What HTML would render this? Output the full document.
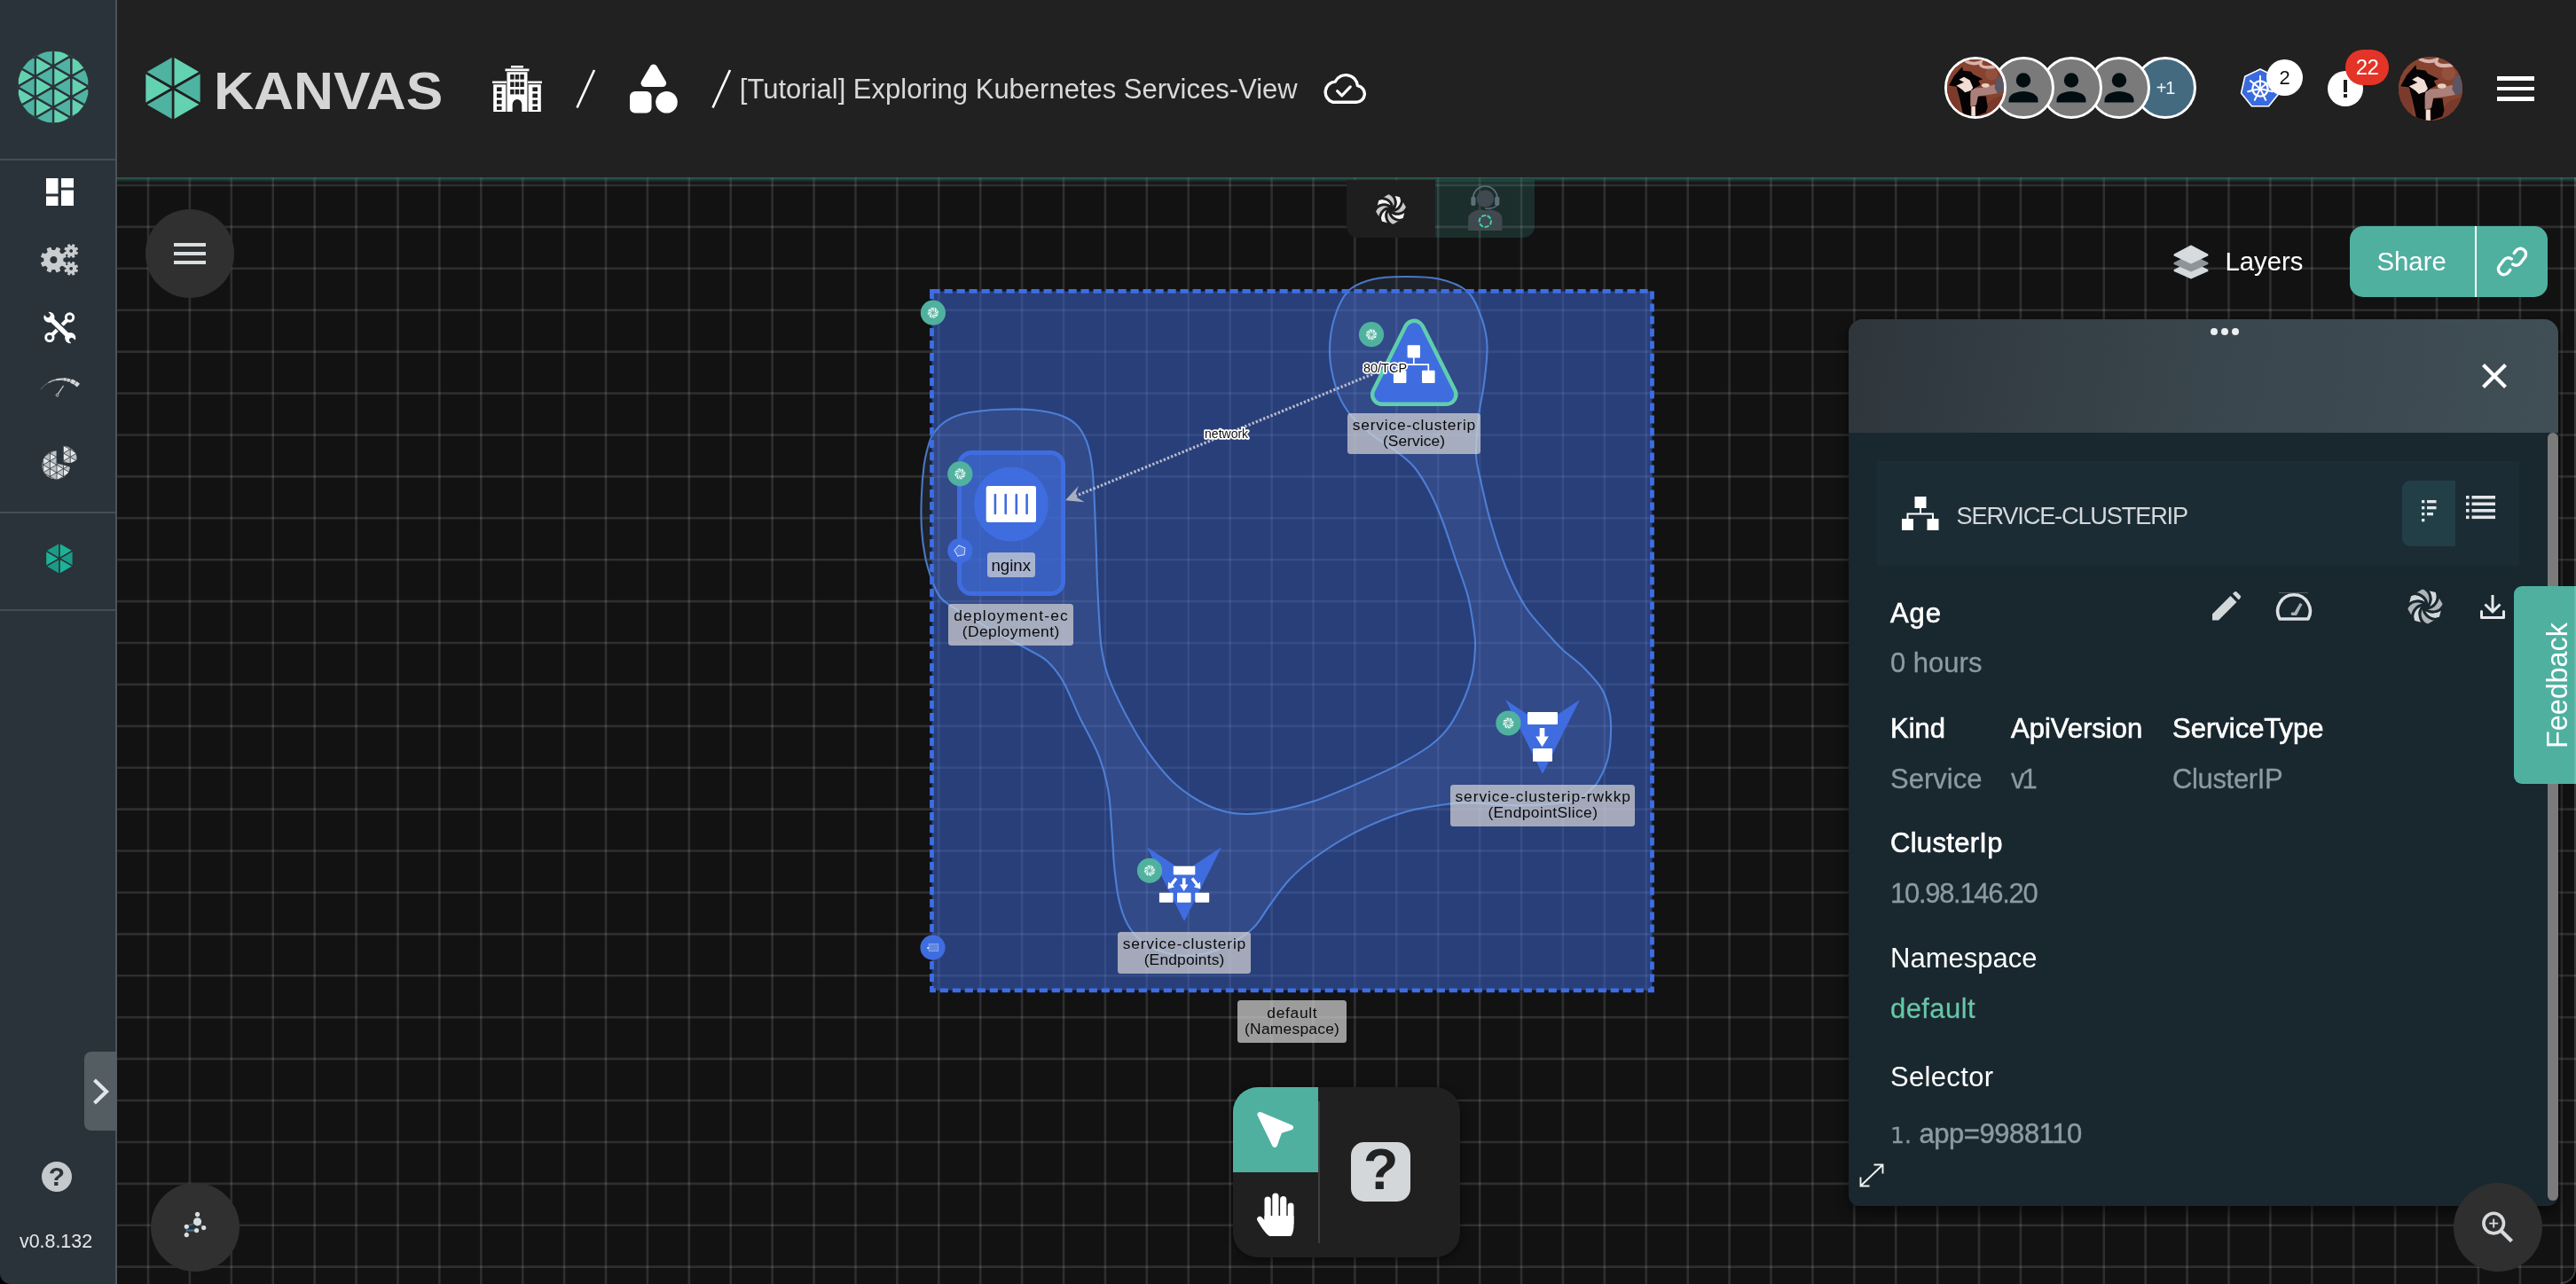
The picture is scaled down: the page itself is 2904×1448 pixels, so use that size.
<!DOCTYPE html>
<html lang="en">
<head>
<meta charset="utf-8">
<title>Kanvas - [Tutorial] Exploring Kubernetes Services-View</title>
<style>
*{box-sizing:border-box;margin:0;padding:0}
html,body{width:2904px;height:1448px;background:#121212}
body{position:relative;font-family:"Liberation Sans",sans-serif;color:#fff}
.abs{position:absolute}
svg{display:block;overflow:visible}
#grid{left:0;top:0;width:2904px;height:1448px}
#sidebar{left:0;top:0;width:132px;height:1448px;background:#2b333a;border-right:2px solid #4a5459}
#sidebar .div{position:absolute;left:0;width:130px;height:2px;background:#474b57;box-shadow:0 -1.5px 0 #29343a,0 1.5px 0 #29343a}
#header{left:132px;top:0;width:2772px;height:200px;background:#212121}
#glow{left:132px;top:200px;width:2772px;height:9px;background:linear-gradient(to bottom,rgba(64,140,124,.66) 0,rgba(56,120,108,.48) 2px,rgba(40,90,80,.18) 5px,rgba(30,70,60,0) 8px)}
.t{position:absolute;white-space:nowrap;line-height:1}
.lbl{position:absolute;background:rgba(215,215,215,.7);border-radius:3.5px;color:#0b0b0b;text-align:center;font-size:17.4px;line-height:18.2px;white-space:nowrap}
.av{width:70px;height:70px;border-radius:50%;border:3px solid #fff;background:#7a7a7a;overflow:hidden}
#panel .h{font-size:31px;color:#fff;-webkit-text-stroke:.65px #fff}
#panel .h2{font-size:31px;color:#fff}
#panel .v{font-size:31px;color:#8d9aa1;-webkit-text-stroke:.3px #8d9aa1}
.rb{position:absolute;border-radius:50%;background:#303030}
</style>
</head>
<body>
<div id="root" style="position:absolute;left:0;top:0;width:2904px;height:1448px;overflow:hidden;will-change:transform">
<svg width="0" height="0" style="position:absolute">
  <defs>
    <g id="avart">
      <rect width="64" height="64" fill="#86432f"/>
      <path d="M30 64L52 44L64 40V64Z" fill="#7a3a2b"/>
      <path d="M0 32C4 30 10 31 12 34C14 42 14 52 15 64H0Z" fill="#7b3a2b"/>
      <circle cx="50" cy="16.500" r="7" fill="#93503c"/>
      <path d="M22 2.500Q30 6.500 38 3Q36 8.500 45 9L53 8.500" fill="none" stroke="#d9b2aa" stroke-width="3.600" stroke-linecap="round"/>
      <path d="M1.900 29.500L8 18.600L17.200 8.300L17.800 12.600L26.900 13.800L29.300 16.800L40.300 22.200L35.400 24L37.800 28.900L31.800 31.900L26.900 35.500V64H18.400L13.500 41.500L10.500 30.700Z" fill="#050304"/>
      <path d="M13.500 22.800L19 19.800L25.700 23.400L29.300 31.900L26.900 34.900L20.200 37.300L17.200 34.300L10.500 29.500L19 25.800Z" fill="#f1ddd4"/>
      <path d="M34.800 41.500H43.900L45.700 53.600L43.900 59.700L32.400 64L31.800 52.700Z" fill="#050304"/>
      <path d="M26.900 35.500L31.800 32.500L39 31.900L53.600 28.300L57.300 37.900L47.600 39.700L34.800 41.500L33 51.200L26.300 52.700L26.300 39.100Z" fill="#ab807a"/>
      <path d="M56.100 19.800L62.800 19.200L64 35.500L57.300 39.100L53.600 32.500Z" fill="#5b5663"/>
      <ellipse cx="43.300" cy="29.300" rx="4.400" ry="2.400" fill="#ead0bf"/>
      <rect x="27.500" y="53" width="4.300" height="11" fill="#f1ddd4"/>
    </g>
    <g id="swirl" stroke-linejoin="round"><path d="M-0.139 -0.990L0.602 -0.799A0.62 0.62 0 0 1 0.039 0.092L0.093 0.037A0.62 0.62 0 0 0 -0.139 -0.990ZM0.990 -0.139L0.799 0.602A0.62 0.62 0 0 1 -0.092 0.039L-0.037 0.093A0.62 0.62 0 0 0 0.990 -0.139ZM0.139 0.990L-0.602 0.799A0.62 0.62 0 0 1 -0.039 -0.092L-0.093 -0.037A0.62 0.62 0 0 0 0.139 0.990ZM-0.990 0.139L-0.799 -0.602A0.62 0.62 0 0 1 0.092 -0.039L0.037 -0.093A0.62 0.62 0 0 0 -0.990 0.139Z"/><path d="M0.602 -0.799L0.990 -0.139A0.62 0.62 0 0 1 -0.037 0.093L0.039 0.092A0.62 0.62 0 0 0 0.602 -0.799ZM0.799 0.602L0.139 0.990A0.62 0.62 0 0 1 -0.093 -0.037L-0.092 0.039A0.62 0.62 0 0 0 0.799 0.602ZM-0.602 0.799L-0.990 0.139A0.62 0.62 0 0 1 0.037 -0.093L-0.039 -0.092A0.62 0.62 0 0 0 -0.602 0.799ZM-0.799 -0.602L-0.139 -0.990A0.62 0.62 0 0 1 0.093 0.037L0.092 -0.039A0.62 0.62 0 0 0 -0.799 -0.602Z" fill-opacity=".8"/></g>
  </defs>
</svg>
<svg id="grid" class="abs" width="2904" height="1448" viewBox="0 0 2904 1448"><path d="M167.00 200V1448M213.91 200V1448M260.82 200V1448M307.73 200V1448M354.64 200V1448M401.55 200V1448M448.46 200V1448M495.37 200V1448M542.28 200V1448M589.19 200V1448M636.10 200V1448M683.01 200V1448M729.92 200V1448M776.83 200V1448M823.74 200V1448M870.65 200V1448M917.56 200V1448M964.47 200V1448M1011.38 200V1448M1058.29 200V1448M1105.20 200V1448M1152.11 200V1448M1199.02 200V1448M1245.93 200V1448M1292.84 200V1448M1339.75 200V1448M1386.66 200V1448M1433.57 200V1448M1480.48 200V1448M1527.39 200V1448M1574.30 200V1448M1621.21 200V1448M1668.12 200V1448M1715.03 200V1448M1761.94 200V1448M1808.85 200V1448M1855.76 200V1448M1902.67 200V1448M1949.58 200V1448M1996.49 200V1448M2043.40 200V1448M2090.31 200V1448M2137.22 200V1448M2184.13 200V1448M2231.04 200V1448M2277.95 200V1448M2324.86 200V1448M2371.77 200V1448M2418.68 200V1448M2465.59 200V1448M2512.50 200V1448M2559.41 200V1448M2606.32 200V1448M2653.23 200V1448M2700.14 200V1448M2747.05 200V1448M2793.96 200V1448M2840.87 200V1448M2887.78 200V1448" stroke="rgba(255,255,255,.122)" stroke-width="2.6" fill="none"/><path d="M132 209.00H2904M132 255.91H2904M132 302.82H2904M132 349.73H2904M132 396.64H2904M132 443.55H2904M132 490.46H2904M132 537.37H2904M132 584.28H2904M132 631.19H2904M132 678.10H2904M132 725.01H2904M132 771.92H2904M132 818.83H2904M132 865.74H2904M132 912.65H2904M132 959.56H2904M132 1006.47H2904M132 1053.38H2904M132 1100.29H2904M132 1147.20H2904M132 1194.11H2904M132 1241.02H2904M132 1287.93H2904M132 1334.84H2904M132 1381.75H2904M132 1428.66H2904" stroke="rgba(255,255,255,.122)" stroke-width="2.6" fill="none"/></svg>
<div id="sidebar" class="abs">
<div class="div" style="top:179px"></div>
<div class="div" style="top:577px"></div>
<div class="div" style="top:687px"></div>
<svg class="abs" style="left:0;top:0" width="132" height="180" viewBox="0 0 132 180"><defs><clipPath id="mc"><circle cx="60" cy="98" r="40.2"/></clipPath></defs><g clip-path="url(#mc)" stroke="#2b333a" stroke-width="2.3" stroke-linejoin="miter"><path d="M-0.6 -53.5L-0.6 -30.2L19.6 -41.8ZM-0.6 -30.2L-0.6 -6.9L19.6 -18.5ZM-0.6 -6.9L-0.6 16.5L19.6 4.8ZM-0.6 16.5L-0.6 39.8L19.6 28.1ZM-0.6 39.8L-0.6 63.0L19.6 51.4ZM-0.6 63.0L-0.6 86.3L19.6 74.7ZM-0.6 86.3L-0.6 109.7L19.6 98.0ZM-0.6 109.7L-0.6 132.9L19.6 121.3ZM-0.6 132.9L-0.6 156.2L19.6 144.6ZM-0.6 156.2L-0.6 179.6L19.6 167.9ZM19.6 -41.8L19.6 -18.5L39.8 -30.2ZM19.6 -18.5L19.6 4.8L39.8 -6.9ZM19.6 4.8L19.6 28.1L39.8 16.5ZM19.6 28.1L19.6 51.4L39.8 39.8ZM19.6 51.4L19.6 74.7L39.8 63.0ZM19.6 74.7L19.6 98.0L39.8 86.3ZM19.6 98.0L19.6 121.3L39.8 109.7ZM19.6 121.3L19.6 144.6L39.8 132.9ZM19.6 144.6L19.6 167.9L39.8 156.2ZM19.6 167.9L19.6 191.2L39.8 179.6ZM39.8 -30.2L39.8 -6.9L60.0 -18.5ZM39.8 -6.9L39.8 16.5L60.0 4.8ZM39.8 16.5L39.8 39.8L60.0 28.1ZM39.8 39.8L39.8 63.0L60.0 51.4ZM39.8 63.0L39.8 86.3L60.0 74.7ZM39.8 86.3L39.8 109.7L60.0 98.0ZM39.8 109.7L39.8 132.9L60.0 121.3ZM39.8 132.9L39.8 156.2L60.0 144.6ZM39.8 156.2L39.8 179.6L60.0 167.9ZM39.8 179.6L39.8 202.9L60.0 191.2ZM60.0 -18.5L60.0 4.8L80.2 -6.9ZM60.0 4.8L60.0 28.1L80.2 16.5ZM60.0 28.1L60.0 51.4L80.2 39.8ZM60.0 51.4L60.0 74.7L80.2 63.0ZM60.0 74.7L60.0 98.0L80.2 86.3ZM60.0 98.0L60.0 121.3L80.2 109.7ZM60.0 121.3L60.0 144.6L80.2 132.9ZM60.0 144.6L60.0 167.9L80.2 156.2ZM60.0 167.9L60.0 191.2L80.2 179.6ZM60.0 191.2L60.0 214.5L80.2 202.9ZM80.2 -6.9L80.2 16.5L100.4 4.8ZM80.2 16.5L80.2 39.8L100.4 28.1ZM80.2 39.8L80.2 63.0L100.4 51.4ZM80.2 63.0L80.2 86.3L100.4 74.7ZM80.2 86.3L80.2 109.7L100.4 98.0ZM80.2 109.7L80.2 132.9L100.4 121.3ZM80.2 132.9L80.2 156.2L100.4 144.6ZM80.2 156.2L80.2 179.6L100.4 167.9ZM80.2 179.6L80.2 202.9L100.4 191.2ZM80.2 202.9L80.2 226.2L100.4 214.5ZM100.4 4.8L100.4 28.1L120.6 16.5ZM100.4 28.1L100.4 51.4L120.6 39.8ZM100.4 51.4L100.4 74.7L120.6 63.0ZM100.4 74.7L100.4 98.0L120.6 86.3ZM100.4 98.0L100.4 121.3L120.6 109.7ZM100.4 121.3L100.4 144.6L120.6 132.9ZM100.4 144.6L100.4 167.9L120.6 156.2ZM100.4 167.9L100.4 191.2L120.6 179.6ZM100.4 191.2L100.4 214.5L120.6 202.9ZM100.4 214.5L100.4 237.8L120.6 226.2Z" fill="#63d2b0"/><path d="M19.6 -41.8L19.6 -18.5L-0.6 -30.2ZM19.6 -18.5L19.6 4.8L-0.6 -6.9ZM19.6 4.8L19.6 28.1L-0.6 16.5ZM19.6 28.1L19.6 51.4L-0.6 39.8ZM19.6 51.4L19.6 74.7L-0.6 63.0ZM19.6 74.7L19.6 98.0L-0.6 86.3ZM19.6 98.0L19.6 121.3L-0.6 109.7ZM19.6 121.3L19.6 144.6L-0.6 132.9ZM19.6 144.6L19.6 167.9L-0.6 156.2ZM19.6 167.9L19.6 191.2L-0.6 179.6ZM39.8 -30.2L39.8 -6.9L19.6 -18.5ZM39.8 -6.9L39.8 16.5L19.6 4.8ZM39.8 16.5L39.8 39.8L19.6 28.1ZM39.8 39.8L39.8 63.0L19.6 51.4ZM39.8 63.0L39.8 86.3L19.6 74.7ZM39.8 86.3L39.8 109.7L19.6 98.0ZM39.8 109.7L39.8 132.9L19.6 121.3ZM39.8 132.9L39.8 156.2L19.6 144.6ZM39.8 156.2L39.8 179.6L19.6 167.9ZM39.8 179.6L39.8 202.9L19.6 191.2ZM60.0 -18.5L60.0 4.8L39.8 -6.9ZM60.0 4.8L60.0 28.1L39.8 16.5ZM60.0 28.1L60.0 51.4L39.8 39.8ZM60.0 51.4L60.0 74.7L39.8 63.0ZM60.0 74.7L60.0 98.0L39.8 86.3ZM60.0 98.0L60.0 121.3L39.8 109.7ZM60.0 121.3L60.0 144.6L39.8 132.9ZM60.0 144.6L60.0 167.9L39.8 156.2ZM60.0 167.9L60.0 191.2L39.8 179.6ZM60.0 191.2L60.0 214.5L39.8 202.9ZM80.2 -6.9L80.2 16.5L60.0 4.8ZM80.2 16.5L80.2 39.8L60.0 28.1ZM80.2 39.8L80.2 63.0L60.0 51.4ZM80.2 63.0L80.2 86.3L60.0 74.7ZM80.2 86.3L80.2 109.7L60.0 98.0ZM80.2 109.7L80.2 132.9L60.0 121.3ZM80.2 132.9L80.2 156.2L60.0 144.6ZM80.2 156.2L80.2 179.6L60.0 167.9ZM80.2 179.6L80.2 202.9L60.0 191.2ZM80.2 202.9L80.2 226.2L60.0 214.5ZM100.4 4.8L100.4 28.1L80.2 16.5ZM100.4 28.1L100.4 51.4L80.2 39.8ZM100.4 51.4L100.4 74.7L80.2 63.0ZM100.4 74.7L100.4 98.0L80.2 86.3ZM100.4 98.0L100.4 121.3L80.2 109.7ZM100.4 121.3L100.4 144.6L80.2 132.9ZM100.4 144.6L100.4 167.9L80.2 156.2ZM100.4 167.9L100.4 191.2L80.2 179.6ZM100.4 191.2L100.4 214.5L80.2 202.9ZM100.4 214.5L100.4 237.8L80.2 226.2ZM120.6 16.5L120.6 39.8L100.4 28.1ZM120.6 39.8L120.6 63.0L100.4 51.4ZM120.6 63.0L120.6 86.3L100.4 74.7ZM120.6 86.3L120.6 109.7L100.4 98.0ZM120.6 109.7L120.6 132.9L100.4 121.3ZM120.6 132.9L120.6 156.2L100.4 144.6ZM120.6 156.2L120.6 179.6L100.4 167.9ZM120.6 179.6L120.6 202.9L100.4 191.2ZM120.6 202.9L120.6 226.2L100.4 214.5ZM120.6 226.2L120.6 249.5L100.4 237.8Z" fill="#4fb3a2"/></g></svg>
<svg class="abs" style="left:52px;top:201px" width="31" height="31" viewBox="0 0 31 31" fill="#fff"><rect x="0" y="0" width="13.500" height="17.500"/><rect x="17" y="0" width="14" height="10.500"/><rect x="0" y="20.500" width="13.500" height="10.500"/><rect x="17" y="13.500" width="14" height="17.500"/></svg>
<svg class="abs" style="left:0;top:0" width="132" height="330" viewBox="0 0 132 330"><path d="M70.81 294.99L74.13 296.64L72.68 300.13L69.17 298.96L66.36 301.77L67.53 305.28L64.04 306.73L62.39 303.41L58.41 303.41L56.76 306.73L53.27 305.28L54.44 301.77L51.63 298.96L48.12 300.13L46.67 296.64L49.99 294.99L49.99 291.01L46.67 289.36L48.12 285.87L51.63 287.04L54.44 284.23L53.27 280.72L56.76 279.27L58.41 282.59L62.39 282.59L64.04 279.27L67.53 280.72L66.36 284.23L69.17 287.04L72.68 285.87L74.13 289.36L70.81 291.01ZM65.00 293.00A4.6 4.6 0 1 0 55.80 293.00A4.6 4.6 0 1 0 65.00 293.00ZM85.41 283.99L87.35 284.90L86.60 286.72L84.58 285.98L83.18 287.38L83.92 289.40L82.10 290.15L81.19 288.21L79.21 288.21L78.30 290.15L76.48 289.40L77.22 287.38L75.82 285.98L73.80 286.72L73.05 284.90L74.99 283.99L74.99 282.01L73.05 281.10L73.80 279.28L75.82 280.02L77.22 278.62L76.48 276.60L78.30 275.85L79.21 277.79L81.19 277.79L82.10 275.85L83.92 276.60L83.18 278.62L84.58 280.02L86.60 279.28L87.35 281.10L85.41 282.01ZM82.70 283.00A2.5 2.5 0 1 0 77.70 283.00A2.5 2.5 0 1 0 82.70 283.00ZM85.41 303.79L87.35 304.70L86.60 306.52L84.58 305.78L83.18 307.18L83.92 309.20L82.10 309.95L81.19 308.01L79.21 308.01L78.30 309.95L76.48 309.20L77.22 307.18L75.82 305.78L73.80 306.52L73.05 304.70L74.99 303.79L74.99 301.81L73.05 300.90L73.80 299.08L75.82 299.82L77.22 298.42L76.48 296.40L78.30 295.65L79.21 297.59L81.19 297.59L82.10 295.65L83.92 296.40L83.18 298.42L84.58 299.82L86.60 299.08L87.35 300.90L85.41 301.81ZM82.70 302.80A2.5 2.5 0 1 0 77.70 302.80A2.5 2.5 0 1 0 82.70 302.80Z" fill="#c9cdd0" fill-rule="evenodd" stroke="#c9cdd0" stroke-width="1.2" stroke-linejoin="round"/></svg>
<svg class="abs" style="left:49px;top:351px" width="37" height="37" viewBox="0 0 37 37">
 <path d="M26.300 10.200L10.100 26.200" stroke="#fff" stroke-width="4.300"/>
 <circle cx="29.550" cy="7" r="4.200" fill="none" stroke="#fff" stroke-width="2.900"/>
 <circle cx="6.900" cy="29.400" r="4.200" fill="none" stroke="#fff" stroke-width="2.900"/>
 <path d="M9 9.300L28 27.800" stroke="#2b333a" stroke-width="8.400"/>
 <path d="M6.400 6.800L30.250 30.100" stroke="#fff" stroke-width="5.500"/>
 <circle cx="6.420" cy="6.760" r="6.100" fill="#fff"/><circle cx="30.250" cy="30.100" r="6.100" fill="#fff"/>
 <path d="M5 4.400L-1 -1.600" stroke="#2b333a" stroke-width="5.400" stroke-linecap="round"/>
 <path d="M31.700 32.500L37.700 38.500" stroke="#2b333a" stroke-width="5.400" stroke-linecap="round"/>
</svg>
<svg class="abs" style="left:0;top:400px" width="132" height="80" viewBox="0 400 132 80" fill="none">
 <path d="M45.74 439.22A29.7 29.7 0 0 1 54.45 431.58" stroke="#7f888e" stroke-width=".7"/>
 <path d="M54.45 431.58A29.7 29.7 0 0 1 63.13 428.25" stroke="#aab0b4" stroke-width="1.300"/>
 <path d="M63.13 428.25A29.7 29.7 0 0 1 71.37 427.67" stroke="#c9cdd0" stroke-width="2.300"/>
 <path d="M71.37 427.67A29.7 29.7 0 0 1 80.43 429.76" stroke="#cfd3d5" stroke-width="3.400" stroke-dasharray="3.600 .5"/>
 <path d="M80.43 429.76A29.7 29.7 0 0 1 88.78 434.89" stroke="#d5d8da" stroke-width="4.700" stroke-dasharray="4.400 .6"/>
 <path d="M65.200 444.400L71.600 435" stroke="#d5d8da" stroke-width="1.100"/>
 <circle cx="64.500" cy="445.600" r="1.400" stroke="#d5d8da" stroke-width=".9"/>
</svg>
<svg class="abs" style="left:0;top:490px" width="132" height="70" viewBox="0 490 132 70">
 <defs><clipPath id="pc"><path d="M63.900 524.200L63.85 508.61A15.900 15.900 0 1 0 79.05 526.71Q70 524 63.900 522.500Z"/><path d="M71.100 518.800L71.10 502.90A15.900 15.900 0 0 1 86.96 517.69Q80 524.500 71.100 520.800Z"/></clipPath></defs>
 <g clip-path="url(#pc)" stroke="#2b333a" stroke-width=".55"><path d="M33.50 445.27L33.50 454.04L41.10 449.66ZM33.50 454.04L33.50 462.81L41.10 458.43ZM33.50 462.81L33.50 471.58L41.10 467.20ZM33.50 471.58L33.50 480.35L41.10 475.97ZM33.50 480.35L33.50 489.12L41.10 484.74ZM33.50 489.12L33.50 497.89L41.10 493.51ZM33.50 497.89L33.50 506.66L41.10 502.28ZM33.50 506.66L33.50 515.43L41.10 511.05ZM33.50 515.43L33.50 524.20L41.10 519.82ZM33.50 524.20L33.50 532.97L41.10 528.59ZM33.50 532.97L33.50 541.74L41.10 537.36ZM33.50 541.74L33.50 550.51L41.10 546.12ZM33.50 550.51L33.50 559.28L41.10 554.90ZM33.50 559.28L33.50 568.05L41.10 563.67ZM41.10 449.66L41.10 458.43L48.70 454.04ZM41.10 458.43L41.10 467.20L48.70 462.81ZM41.10 467.20L41.10 475.97L48.70 471.58ZM41.10 475.97L41.10 484.74L48.70 480.35ZM41.10 484.74L41.10 493.51L48.70 489.12ZM41.10 493.51L41.10 502.28L48.70 497.89ZM41.10 502.28L41.10 511.05L48.70 506.66ZM41.10 511.05L41.10 519.82L48.70 515.43ZM41.10 519.82L41.10 528.59L48.70 524.20ZM41.10 528.59L41.10 537.36L48.70 532.97ZM41.10 537.36L41.10 546.12L48.70 541.74ZM41.10 546.12L41.10 554.90L48.70 550.51ZM41.10 554.90L41.10 563.67L48.70 559.28ZM41.10 563.67L41.10 572.44L48.70 568.05ZM48.70 454.04L48.70 462.81L56.30 458.43ZM48.70 462.81L48.70 471.58L56.30 467.20ZM48.70 471.58L48.70 480.35L56.30 475.97ZM48.70 480.35L48.70 489.12L56.30 484.74ZM48.70 489.12L48.70 497.89L56.30 493.51ZM48.70 497.89L48.70 506.66L56.30 502.28ZM48.70 506.66L48.70 515.43L56.30 511.05ZM48.70 515.43L48.70 524.20L56.30 519.82ZM48.70 524.20L48.70 532.97L56.30 528.59ZM48.70 532.97L48.70 541.74L56.30 537.36ZM48.70 541.74L48.70 550.51L56.30 546.12ZM48.70 550.51L48.70 559.28L56.30 554.90ZM48.70 559.28L48.70 568.05L56.30 563.67ZM48.70 568.05L48.70 576.82L56.30 572.44ZM56.30 458.43L56.30 467.20L63.90 462.81ZM56.30 467.20L56.30 475.97L63.90 471.58ZM56.30 475.97L56.30 484.74L63.90 480.35ZM56.30 484.74L56.30 493.51L63.90 489.12ZM56.30 493.51L56.30 502.28L63.90 497.89ZM56.30 502.28L56.30 511.05L63.90 506.66ZM56.30 511.05L56.30 519.82L63.90 515.43ZM56.30 519.82L56.30 528.59L63.90 524.20ZM56.30 528.59L56.30 537.36L63.90 532.97ZM56.30 537.36L56.30 546.12L63.90 541.74ZM56.30 546.12L56.30 554.90L63.90 550.51ZM56.30 554.90L56.30 563.67L63.90 559.28ZM56.30 563.67L56.30 572.44L63.90 568.05ZM56.30 572.44L56.30 581.21L63.90 576.82ZM63.90 462.81L63.90 471.58L71.50 467.20ZM63.90 471.58L63.90 480.35L71.50 475.97ZM63.90 480.35L63.90 489.12L71.50 484.74ZM63.90 489.12L63.90 497.89L71.50 493.51ZM63.90 497.89L63.90 506.66L71.50 502.28ZM63.90 506.66L63.90 515.43L71.50 511.05ZM63.90 515.43L63.90 524.20L71.50 519.82ZM63.90 524.20L63.90 532.97L71.50 528.59ZM63.90 532.97L63.90 541.74L71.50 537.36ZM63.90 541.74L63.90 550.51L71.50 546.12ZM63.90 550.51L63.90 559.28L71.50 554.90ZM63.90 559.28L63.90 568.05L71.50 563.67ZM63.90 568.05L63.90 576.82L71.50 572.44ZM63.90 576.82L63.90 585.59L71.50 581.21ZM71.50 467.20L71.50 475.97L79.10 471.58ZM71.50 475.97L71.50 484.74L79.10 480.35ZM71.50 484.74L71.50 493.51L79.10 489.12ZM71.50 493.51L71.50 502.28L79.10 497.89ZM71.50 502.28L71.50 511.05L79.10 506.66ZM71.50 511.05L71.50 519.82L79.10 515.43ZM71.50 519.82L71.50 528.59L79.10 524.20ZM71.50 528.59L71.50 537.36L79.10 532.97ZM71.50 537.36L71.50 546.12L79.10 541.74ZM71.50 546.12L71.50 554.90L79.10 550.51ZM71.50 554.90L71.50 563.67L79.10 559.28ZM71.50 563.67L71.50 572.44L79.10 568.05ZM71.50 572.44L71.50 581.21L79.10 576.82ZM71.50 581.21L71.50 589.98L79.10 585.59ZM79.10 471.58L79.10 480.35L86.70 475.97ZM79.10 480.35L79.10 489.12L86.70 484.74ZM79.10 489.12L79.10 497.89L86.70 493.51ZM79.10 497.89L79.10 506.66L86.70 502.28ZM79.10 506.66L79.10 515.43L86.70 511.05ZM79.10 515.43L79.10 524.20L86.70 519.82ZM79.10 524.20L79.10 532.97L86.70 528.59ZM79.10 532.97L79.10 541.74L86.70 537.36ZM79.10 541.74L79.10 550.51L86.70 546.12ZM79.10 550.51L79.10 559.28L86.70 554.90ZM79.10 559.28L79.10 568.05L86.70 563.67ZM79.10 568.05L79.10 576.82L86.70 572.44ZM79.10 576.82L79.10 585.59L86.70 581.21ZM79.10 585.59L79.10 594.36L86.70 589.98ZM86.70 475.97L86.70 484.74L94.30 480.35ZM86.70 484.74L86.70 493.51L94.30 489.12ZM86.70 493.51L86.70 502.28L94.30 497.89ZM86.70 502.28L86.70 511.05L94.30 506.66ZM86.70 511.05L86.70 519.82L94.30 515.43ZM86.70 519.82L86.70 528.59L94.30 524.20ZM86.70 528.59L86.70 537.36L94.30 532.97ZM86.70 537.36L86.70 546.12L94.30 541.74ZM86.70 546.12L86.70 554.90L94.30 550.51ZM86.70 554.90L86.70 563.67L94.30 559.28ZM86.70 563.67L86.70 572.44L94.30 568.05ZM86.70 572.44L86.70 581.21L94.30 576.82ZM86.70 581.21L86.70 589.98L94.30 585.59ZM86.70 589.98L86.70 598.75L94.30 594.36ZM94.30 480.35L94.30 489.12L101.90 484.74ZM94.30 489.12L94.30 497.89L101.90 493.51ZM94.30 497.89L94.30 506.66L101.90 502.28ZM94.30 506.66L94.30 515.43L101.90 511.05ZM94.30 515.43L94.30 524.20L101.90 519.82ZM94.30 524.20L94.30 532.97L101.90 528.59ZM94.30 532.97L94.30 541.74L101.90 537.36ZM94.30 541.74L94.30 550.51L101.90 546.12ZM94.30 550.51L94.30 559.28L101.90 554.90ZM94.30 559.28L94.30 568.05L101.90 563.67ZM94.30 568.05L94.30 576.82L101.90 572.44ZM94.30 576.82L94.30 585.59L101.90 581.21ZM94.30 585.59L94.30 594.36L101.90 589.98ZM94.30 594.36L94.30 603.13L101.90 598.75Z" fill="#e6e8e9"/><path d="M41.10 449.66L41.10 458.43L33.50 454.04ZM41.10 458.43L41.10 467.20L33.50 462.81ZM41.10 467.20L41.10 475.97L33.50 471.58ZM41.10 475.97L41.10 484.74L33.50 480.35ZM41.10 484.74L41.10 493.51L33.50 489.12ZM41.10 493.51L41.10 502.28L33.50 497.89ZM41.10 502.28L41.10 511.05L33.50 506.66ZM41.10 511.05L41.10 519.82L33.50 515.43ZM41.10 519.82L41.10 528.59L33.50 524.20ZM41.10 528.59L41.10 537.36L33.50 532.97ZM41.10 537.36L41.10 546.12L33.50 541.74ZM41.10 546.12L41.10 554.90L33.50 550.51ZM41.10 554.90L41.10 563.67L33.50 559.28ZM41.10 563.67L41.10 572.44L33.50 568.05ZM48.70 454.04L48.70 462.81L41.10 458.43ZM48.70 462.81L48.70 471.58L41.10 467.20ZM48.70 471.58L48.70 480.35L41.10 475.97ZM48.70 480.35L48.70 489.12L41.10 484.74ZM48.70 489.12L48.70 497.89L41.10 493.51ZM48.70 497.89L48.70 506.66L41.10 502.28ZM48.70 506.66L48.70 515.43L41.10 511.05ZM48.70 515.43L48.70 524.20L41.10 519.82ZM48.70 524.20L48.70 532.97L41.10 528.59ZM48.70 532.97L48.70 541.74L41.10 537.36ZM48.70 541.74L48.70 550.51L41.10 546.12ZM48.70 550.51L48.70 559.28L41.10 554.90ZM48.70 559.28L48.70 568.05L41.10 563.67ZM48.70 568.05L48.70 576.82L41.10 572.44ZM56.30 458.43L56.30 467.20L48.70 462.81ZM56.30 467.20L56.30 475.97L48.70 471.58ZM56.30 475.97L56.30 484.74L48.70 480.35ZM56.30 484.74L56.30 493.51L48.70 489.12ZM56.30 493.51L56.30 502.28L48.70 497.89ZM56.30 502.28L56.30 511.05L48.70 506.66ZM56.30 511.05L56.30 519.82L48.70 515.43ZM56.30 519.82L56.30 528.59L48.70 524.20ZM56.30 528.59L56.30 537.36L48.70 532.97ZM56.30 537.36L56.30 546.12L48.70 541.74ZM56.30 546.12L56.30 554.90L48.70 550.51ZM56.30 554.90L56.30 563.67L48.70 559.28ZM56.30 563.67L56.30 572.44L48.70 568.05ZM56.30 572.44L56.30 581.21L48.70 576.82ZM63.90 462.81L63.90 471.58L56.30 467.20ZM63.90 471.58L63.90 480.35L56.30 475.97ZM63.90 480.35L63.90 489.12L56.30 484.74ZM63.90 489.12L63.90 497.89L56.30 493.51ZM63.90 497.89L63.90 506.66L56.30 502.28ZM63.90 506.66L63.90 515.43L56.30 511.05ZM63.90 515.43L63.90 524.20L56.30 519.82ZM63.90 524.20L63.90 532.97L56.30 528.59ZM63.90 532.97L63.90 541.74L56.30 537.36ZM63.90 541.74L63.90 550.51L56.30 546.12ZM63.90 550.51L63.90 559.28L56.30 554.90ZM63.90 559.28L63.90 568.05L56.30 563.67ZM63.90 568.05L63.90 576.82L56.30 572.44ZM63.90 576.82L63.90 585.59L56.30 581.21ZM71.50 467.20L71.50 475.97L63.90 471.58ZM71.50 475.97L71.50 484.74L63.90 480.35ZM71.50 484.74L71.50 493.51L63.90 489.12ZM71.50 493.51L71.50 502.28L63.90 497.89ZM71.50 502.28L71.50 511.05L63.90 506.66ZM71.50 511.05L71.50 519.82L63.90 515.43ZM71.50 519.82L71.50 528.59L63.90 524.20ZM71.50 528.59L71.50 537.36L63.90 532.97ZM71.50 537.36L71.50 546.12L63.90 541.74ZM71.50 546.12L71.50 554.90L63.90 550.51ZM71.50 554.90L71.50 563.67L63.90 559.28ZM71.50 563.67L71.50 572.44L63.90 568.05ZM71.50 572.44L71.50 581.21L63.90 576.82ZM71.50 581.21L71.50 589.98L63.90 585.59ZM79.10 471.58L79.10 480.35L71.50 475.97ZM79.10 480.35L79.10 489.12L71.50 484.74ZM79.10 489.12L79.10 497.89L71.50 493.51ZM79.10 497.89L79.10 506.66L71.50 502.28ZM79.10 506.66L79.10 515.43L71.50 511.05ZM79.10 515.43L79.10 524.20L71.50 519.82ZM79.10 524.20L79.10 532.97L71.50 528.59ZM79.10 532.97L79.10 541.74L71.50 537.36ZM79.10 541.74L79.10 550.51L71.50 546.12ZM79.10 550.51L79.10 559.28L71.50 554.90ZM79.10 559.28L79.10 568.05L71.50 563.67ZM79.10 568.05L79.10 576.82L71.50 572.44ZM79.10 576.82L79.10 585.59L71.50 581.21ZM79.10 585.59L79.10 594.36L71.50 589.98ZM86.70 475.97L86.70 484.74L79.10 480.35ZM86.70 484.74L86.70 493.51L79.10 489.12ZM86.70 493.51L86.70 502.28L79.10 497.89ZM86.70 502.28L86.70 511.05L79.10 506.66ZM86.70 511.05L86.70 519.82L79.10 515.43ZM86.70 519.82L86.70 528.59L79.10 524.20ZM86.70 528.59L86.70 537.36L79.10 532.97ZM86.70 537.36L86.70 546.12L79.10 541.74ZM86.70 546.12L86.70 554.90L79.10 550.51ZM86.70 554.90L86.70 563.67L79.10 559.28ZM86.70 563.67L86.70 572.44L79.10 568.05ZM86.70 572.44L86.70 581.21L79.10 576.82ZM86.70 581.21L86.70 589.98L79.10 585.59ZM86.70 589.98L86.70 598.75L79.10 594.36ZM94.30 480.35L94.30 489.12L86.70 484.74ZM94.30 489.12L94.30 497.89L86.70 493.51ZM94.30 497.89L94.30 506.66L86.70 502.28ZM94.30 506.66L94.30 515.43L86.70 511.05ZM94.30 515.43L94.30 524.20L86.70 519.82ZM94.30 524.20L94.30 532.97L86.70 528.59ZM94.30 532.97L94.30 541.74L86.70 537.36ZM94.30 541.74L94.30 550.51L86.70 546.12ZM94.30 550.51L94.30 559.28L86.70 554.90ZM94.30 559.28L94.30 568.05L86.70 563.67ZM94.30 568.05L94.30 576.82L86.70 572.44ZM94.30 576.82L94.30 585.59L86.70 581.21ZM94.30 585.59L94.30 594.36L86.70 589.98ZM94.30 594.36L94.30 603.13L86.70 598.75ZM101.90 484.74L101.90 493.51L94.30 489.12ZM101.90 493.51L101.90 502.28L94.30 497.89ZM101.90 502.28L101.90 511.05L94.30 506.66ZM101.90 511.05L101.90 519.82L94.30 515.43ZM101.90 519.82L101.90 528.59L94.30 524.20ZM101.90 528.59L101.90 537.36L94.30 532.97ZM101.90 537.36L101.90 546.12L94.30 541.74ZM101.90 546.12L101.90 554.90L94.30 550.51ZM101.90 554.90L101.90 563.67L94.30 559.28ZM101.90 563.67L101.90 572.44L94.30 568.05ZM101.90 572.44L101.90 581.21L94.30 576.82ZM101.90 581.21L101.90 589.98L94.30 585.59ZM101.90 589.98L101.90 598.75L94.30 594.36ZM101.90 598.75L101.90 607.52L94.30 603.13Z" fill="#bec2c5"/></g>
</svg>
<svg class="abs" style="left:0;top:600px" width="132" height="60" viewBox="0 600 132 60"><g stroke="#2b333a" stroke-width="1.500"><path d="M66.9 629.8L66.90 612.00L82.32 620.90Z" fill="#1bb398"/><path d="M66.9 629.8L82.32 620.90L82.32 638.70Z" fill="#1b9a85"/><path d="M66.9 629.8L82.32 638.70L66.90 647.60Z" fill="#1bb398"/><path d="M66.9 629.8L66.90 647.60L51.48 638.70Z" fill="#1b9a85"/><path d="M66.9 629.8L51.48 638.70L51.48 620.90Z" fill="#1bb398"/><path d="M66.9 629.8L51.48 620.90L66.90 612.00Z" fill="#1b9a85"/></g></svg>
<div class="abs" style="left:46.800px;top:1309.800px;width:34px;height:34px;border-radius:50%;background:#c5c9cc"></div><div class="t" style="left:46.800px;width:34px;text-align:center;top:1311.500px;font-size:30px;font-weight:bold;color:#2b333a">?</div>
<div class="t" id="ver" style="left:22px;top:1390.300px;font-size:21.400px;color:#e6e9eb">v0.8.132</div>
</div>
<div id="header" class="abs">
  <!-- kanvas hex logo : header-local coords (x-132) -->
  <svg class="abs" style="left:30.700px;top:63px" width="64" height="73" viewBox="-32 -36.5 64 73">
    <g stroke="#212121" stroke-width="2.6" stroke-linejoin="miter">
      <path d="M0 0L0 -36.900L31.950 -18.450Z" fill="#63d2b0"/>
      <path d="M0 0L31.950 -18.450L31.950 18.450Z" fill="#4fb3a2"/>
      <path d="M0 0L31.950 18.450L0 36.900Z" fill="#63d2b0"/>
      <path d="M0 0L0 36.900L-31.950 18.450Z" fill="#4fb3a2"/>
      <path d="M0 0L-31.950 18.450L-31.950 -18.450Z" fill="#63d2b0"/>
      <path d="M0 0L-31.950 -18.450L0 -36.900Z" fill="#4fb3a2"/>
    </g>
  </svg>
  <div class="t" id="kanvas" style="left:109.400px;top:74px;font-size:58.6px;font-weight:bold;color:#d5d5d5;transform-origin:0 50%;transform:scaleX(1.063)">KANVAS</div>
  <!-- building -->
  <svg class="abs" style="left:423px;top:74px" width="56" height="52" viewBox="0 0 56 52" fill="#fff">
    <path d="M21 0h14v2.4H21zM14.5 3.6h27v2.6h-27zM16.5 7.2h23V52h-6.2V44a5.3 6 0 0 0-10.6 0v8H16.5zM0 17.5h16v2.6H0zM40 17.5h16v2.6H40zM1.2 21.2h14.2V52H1.2zM40.6 21.2h14.2V52H40.6z"/>
    <g fill="#212121">
      <rect x="20.2" y="10" width="4.4" height="5.6"/><rect x="25.8" y="10" width="4.4" height="5.6"/><rect x="31.4" y="10" width="4.4" height="5.6"/>
      <rect x="20.2" y="18.4" width="4.4" height="5.6"/><rect x="25.8" y="18.4" width="4.4" height="5.6"/><rect x="31.4" y="18.4" width="4.4" height="5.6"/>
      <rect x="20.2" y="26.8" width="4.4" height="5.6"/><rect x="25.8" y="26.8" width="4.4" height="5.6"/><rect x="31.4" y="26.8" width="4.4" height="5.6"/>
      <rect x="5" y="24.4" width="5.6" height="4.6"/><rect x="5" y="31.6" width="5.6" height="4.6"/><rect x="5" y="38.8" width="5.6" height="4.6"/><rect x="5" y="46" width="5.6" height="4"/>
      <rect x="45.4" y="24.4" width="5.6" height="4.6"/><rect x="45.4" y="31.6" width="5.6" height="4.6"/><rect x="45.4" y="38.8" width="5.6" height="4.6"/><rect x="45.4" y="46" width="5.6" height="4"/>
    </g>
  </svg>
  <svg class="abs" style="left:514px;top:76px" width="28" height="48" viewBox="0 0 28 48"><path d="M4.5 45.5L24 3" stroke="#fff" stroke-width="2.6" fill="none"/></svg>
  <!-- shapes -->
  <svg class="abs" style="left:578px;top:72px" width="54" height="56" viewBox="0 0 54 56" fill="#fff">
    <path d="M23.2 2.6a4.2 4.2 0 0 1 7.2 0l10.2 17.2a4.2 4.2 0 0 1-3.6 6.2H16.600a4.200 4.200 0 0 1-3.600-6.200z"/>
    <rect x="0" y="31" width="24.500" height="24.500" rx="6"/>
    <circle cx="41.5" cy="43.300" r="12.300"/>
  </svg>
  <svg class="abs" style="left:667px;top:76px" width="28" height="48" viewBox="0 0 28 48"><path d="M4.5 45.5L24 3" stroke="#fff" stroke-width="2.6" fill="none"/></svg>
  <div class="t" id="title" style="left:701.800px;top:85.200px;font-size:31px;color:#d9d9d9;font-weight:normal">[Tutorial] Exploring Kubernetes Services-View</div>
  <!-- cloud check -->
  <svg class="abs" style="left:1356.500px;top:82px" width="51" height="35" viewBox="0 0 48 33" fill="none" stroke="#fff" stroke-width="3.2" stroke-linecap="round" stroke-linejoin="round">
    <path d="M12.500 31.300H37.500a8.800 8.800 0 0 0 1.500-17.500A12.500 12.500 0 0 0 15.300 9.500 11.200 11.200 0 0 0 12.500 31.300z"/>
    <path d="M17.500 19.500l4.800 4.800 9-9.300" stroke-width="3"/>
  </svg>
</div>
<div id="glow" class="abs"></div>
<div id="hright" class="abs" style="left:0;top:0;width:2904px;height:200px">
  <!-- +1 avatar (bottom of stack) -->
  <div class="abs av" style="left:2406px;top:64px;background:#446a80;z-index:1"><div class="t" style="left:0;width:64px;text-align:center;top:22px;font-size:20px;letter-spacing:-1.200px;color:#f1f4f6">+1</div></div>
  <div class="abs av" style="left:2354px;top:64px;z-index:2"><svg width="64" height="64" viewBox="0 0 64 64"><circle cx="32" cy="23.500" r="8.200" fill="#020d12"/><path d="M15.500 48.500v-2.800c0-6.200 8.800-9.600 16.500-9.600s16.500 3.400 16.500 9.600v2.800z" fill="#020d12"/></svg></div>
  <div class="abs av" style="left:2300px;top:64px;z-index:3"><svg width="64" height="64" viewBox="0 0 64 64"><circle cx="32" cy="23.500" r="8.200" fill="#020d12"/><path d="M15.500 48.500v-2.800c0-6.200 8.800-9.600 16.500-9.600s16.500 3.400 16.500 9.600v2.800z" fill="#020d12"/></svg></div>
  <div class="abs av" style="left:2246px;top:64px;z-index:4"><svg width="64" height="64" viewBox="0 0 64 64"><circle cx="32" cy="23.500" r="8.200" fill="#020d12"/><path d="M15.500 48.500v-2.800c0-6.200 8.800-9.600 16.500-9.600s16.500 3.400 16.500 9.600v2.800z" fill="#020d12"/></svg></div>
  <div class="abs av" style="left:2192px;top:64px;z-index:5;background:#8a4a3c">
    <svg width="64" height="64" viewBox="0 0 64 64">
      <use href="#avart"/>
    </svg>
  </div>
  <!-- k8s -->
  <svg class="abs" style="left:2525px;top:77px" width="46" height="46" viewBox="-23 -23 46 46">
    <path d="M0 -22L17.200 -13.700L21.450 4.900L9.550 19.820L-9.550 19.820L-21.450 4.900L-17.200 -13.700Z" fill="#3a6ae0" stroke="#fff" stroke-width="1.600" stroke-linejoin="round"/>
    <g stroke="#fff" fill="none" stroke-linecap="round">
      <circle r="8.600" stroke-width="2.300"/>
      <path d="M0.00 -3.20L0.00 -14.20M2.50 -2.00L11.10 -8.85M3.12 0.71L13.84 3.16M1.39 2.88L6.16 12.79M-1.39 2.88L-6.16 12.79M-3.12 0.71L-13.84 3.16M-2.50 -2.00L-11.10 -8.85" stroke-width="2"/>
    </g>
    <circle r="2.700" fill="#fff"/>
  </svg>
  <div class="abs" style="left:2555px;top:67px;width:41px;height:41px;border-radius:50%;background:#fff"><div class="t" style="left:0;width:41px;text-align:center;top:10px;font-size:22px;color:#111">2</div></div>
  <!-- notification -->
  <div class="abs" style="left:2624px;top:80px;width:40px;height:40px;border-radius:50%;background:#fff">
    <div class="abs" style="left:17.500px;top:10px;width:4.600px;height:13.500px;background:#1e1e1e"></div>
    <div class="abs" style="left:17.500px;top:26px;width:4.600px;height:4.400px;background:#1e1e1e"></div>
  </div>
  <div class="abs" style="left:2644px;top:56px;width:49px;height:40px;border-radius:20px;background:#e43427"><div class="t" style="left:0;width:49px;text-align:center;top:8px;font-size:24px;color:#fff;letter-spacing:-.5px">22</div></div>
  <!-- user avatar -->
  <div class="abs" style="left:2704px;top:64px;width:72px;height:72px;border-radius:50%;overflow:hidden;background:#8a4a3c">
    <svg width="72" height="72" viewBox="0 0 64 64"><use href="#avart"/></svg>
  </div>
  <!-- hamburger -->
  <div class="abs" style="left:2815px;top:86px;width:42px;height:4.600px;background:#fff"></div>
  <div class="abs" style="left:2815px;top:97.700px;width:42px;height:4.600px;background:#fff"></div>
  <div class="abs" style="left:2815px;top:109.400px;width:42px;height:4.600px;background:#fff"></div>
</div>
<svg id="cy" class="abs" style="left:0;top:0" width="2904" height="1448" viewBox="0 0 2904 1448">
<rect x="1050.5" y="328.4" width="812" height="788.4" fill="rgba(63,107,226,.5)" stroke="none"/>
<path d="M1052.6 488.3C1056.2 483.5 1061.4 477.6 1068.0 473.8C1074.6 470.0 1081.9 467.3 1092.0 465.3C1102.1 463.3 1116.5 462.2 1128.6 461.7C1140.7 461.2 1153.9 461.2 1164.8 462.2C1175.7 463.2 1185.8 465.1 1193.8 467.8C1201.8 470.5 1207.8 473.6 1213.0 478.6C1218.2 483.6 1222.0 490.4 1225.0 498.0C1228.0 505.6 1229.6 514.0 1231.0 524.5C1232.4 535.0 1232.8 546.6 1233.6 560.7C1234.3 574.8 1234.9 593.0 1235.5 609.0C1236.1 625.0 1236.3 640.9 1237.0 657.0C1237.7 673.1 1238.8 693.0 1239.6 705.5C1240.4 718.0 1240.4 722.6 1242.0 732.0C1243.6 741.4 1244.8 750.4 1249.0 762.0C1253.2 773.6 1259.8 787.9 1267.0 801.7C1274.2 815.5 1283.0 831.6 1292.0 844.7C1301.0 857.8 1311.4 871.0 1321.0 880.5C1330.6 890.0 1340.0 896.3 1349.6 902.0C1359.1 907.7 1368.7 911.8 1378.3 914.5C1387.9 917.2 1396.2 918.2 1407.0 918.0C1417.8 917.8 1430.5 915.9 1442.8 913.5C1455.1 911.1 1466.5 908.4 1481.0 903.5C1495.5 898.6 1513.8 890.8 1529.6 884.0C1545.4 877.2 1562.3 869.8 1576.0 862.6C1589.7 855.4 1602.4 848.2 1612.0 841.0C1621.6 833.8 1627.0 828.6 1633.5 819.6C1640.0 810.6 1646.6 797.1 1651.0 787.0C1655.4 776.9 1658.0 768.2 1660.0 758.7C1662.0 749.2 1662.7 737.6 1663.0 730.0C1663.3 722.4 1663.3 722.5 1662.0 713.0C1660.7 703.5 1658.6 686.8 1655.0 673.0C1651.4 659.2 1645.4 644.3 1640.6 630.0C1635.8 615.7 1630.8 599.5 1626.0 587.0C1621.2 574.5 1617.3 565.1 1612.0 555.0C1606.7 544.9 1600.6 534.3 1594.0 526.5C1587.4 518.7 1580.8 514.2 1572.6 508.0C1564.4 501.8 1553.7 496.1 1545.0 489.0C1536.3 481.9 1527.1 474.3 1520.6 465.6C1514.1 456.9 1509.6 448.4 1506.0 437.0C1502.4 425.6 1499.2 410.7 1499.0 397.5C1498.8 384.3 1500.9 369.6 1504.5 358.0C1508.1 346.4 1513.4 334.8 1520.6 327.6C1527.8 320.4 1537.1 317.6 1547.5 315.0C1557.9 312.4 1570.6 312.1 1583.0 312.0C1595.4 311.9 1610.2 311.8 1622.0 314.5C1633.8 317.2 1646.0 321.2 1654.0 328.5C1662.0 335.8 1666.2 347.8 1670.0 358.0C1673.8 368.2 1676.0 377.5 1676.5 390.0C1677.0 402.5 1674.5 420.4 1673.0 433.0C1671.5 445.6 1669.0 452.4 1667.5 465.6C1666.0 478.8 1663.8 499.4 1664.0 512.0C1664.2 524.6 1666.3 528.5 1669.0 541.0C1671.7 553.5 1675.2 570.3 1680.0 587.0C1684.8 603.7 1691.4 624.8 1698.0 641.0C1704.6 657.2 1711.5 671.5 1719.5 684.0C1727.5 696.5 1738.9 707.8 1746.0 716.0C1753.1 724.2 1755.7 727.1 1762.0 733.0C1768.3 738.9 1776.8 744.2 1784.0 751.5C1791.2 758.8 1800.4 768.2 1805.5 776.6C1810.6 785.0 1812.7 793.4 1814.4 801.7C1816.2 810.1 1816.3 817.8 1816.0 826.7C1815.7 835.7 1814.9 846.4 1812.6 855.4C1810.3 864.4 1805.3 874.6 1802.0 880.5C1798.7 886.4 1797.2 887.4 1793.0 891.0C1788.8 894.6 1784.9 899.3 1776.8 902.0C1768.7 904.7 1755.9 905.9 1744.6 907.0C1733.2 908.1 1722.5 908.6 1708.7 908.4C1694.9 908.2 1674.5 905.9 1662.0 905.6C1649.5 905.3 1646.7 904.9 1633.5 906.6C1620.3 908.3 1600.3 910.8 1583.0 916.0C1565.7 921.2 1546.3 929.4 1529.6 937.8C1512.9 946.2 1495.6 957.5 1483.0 966.5C1470.4 975.5 1462.5 982.6 1454.0 991.5C1445.5 1000.4 1438.7 1011.0 1432.0 1020.0C1425.3 1029.0 1420.6 1038.4 1414.0 1045.3C1407.4 1052.2 1400.9 1056.6 1392.6 1061.4C1384.3 1066.2 1373.6 1071.2 1364.0 1074.0C1354.4 1076.8 1344.6 1078.3 1335.0 1078.0C1325.4 1077.7 1314.9 1075.1 1306.6 1072.0C1298.3 1068.9 1291.0 1064.6 1285.0 1059.6C1279.0 1054.5 1274.7 1048.9 1270.8 1041.7C1266.9 1034.5 1264.2 1026.8 1261.8 1016.6C1259.4 1006.5 1258.0 995.1 1256.5 980.8C1255.0 966.5 1254.2 945.6 1253.0 930.6C1251.8 915.6 1251.7 904.1 1249.3 891.0C1246.9 877.9 1243.9 865.5 1238.5 851.8C1233.1 838.1 1223.6 822.5 1217.0 808.8C1210.4 795.1 1205.0 779.9 1199.0 769.4C1193.0 758.9 1187.5 752.1 1181.0 746.0C1174.5 739.9 1168.5 737.8 1160.0 733.0C1151.5 728.2 1140.0 722.5 1130.0 717.0C1120.0 711.5 1109.9 705.7 1100.0 700.0C1090.1 694.3 1077.6 687.3 1070.7 682.6C1063.8 677.9 1062.0 676.7 1058.6 671.7C1055.1 666.7 1052.6 659.7 1050.0 652.4C1047.4 645.1 1044.8 637.2 1043.0 628.0C1041.2 618.8 1039.7 608.2 1039.0 597.0C1038.3 585.8 1038.3 572.8 1038.8 560.7C1039.2 548.6 1040.4 534.1 1041.7 524.5C1043.0 514.9 1044.7 508.8 1046.5 502.8C1048.3 496.8 1049.0 493.1 1052.6 488.3Z" fill="rgba(130,170,255,.105)" stroke="rgba(84,140,232,.82)" stroke-width="2.1"/>
<rect x="1050.5" y="328.4" width="812" height="788.4" fill="none" stroke="#3e6de3" stroke-width="4.8" stroke-dasharray="9.2 4.8"/>
<path d="M1211.8 559.7L1548 421.6" stroke="#b6bacb" stroke-width="3.2" stroke-dasharray="2.4 2.1" fill="none"/>
<path d="M1201 564.3L1215.8 548L1211.8 559.7L1222.6 566.3Z" fill="#a9aec1"/>
<rect x="1081.5" y="510.5" width="117" height="159" rx="14" fill="rgba(63,109,224,.62)" stroke="#3f6de0" stroke-width="5"/>
<circle cx="1140" cy="568.6" r="42" fill="#3f6de0"/>
<rect x="1111.7" y="548" width="56.3" height="41" rx="2.5" fill="#fff"/>
<path d="M1121.9 558V579M1133.7 558V579M1145.8 558V579M1157.6 558V579" stroke="#3f6de0" stroke-width="2.6" stroke-linecap="round"/>
<circle cx="1082.3" cy="534.4" r="14.1" fill="#50b19e"/><use href="#swirl" transform="translate(1082.3,534.4) scale(6.6)" fill="#fff" stroke="#50b19e" stroke-width=".1"/>
<circle cx="1082.3" cy="621" r="14.1" fill="#3f6de0"/><path d="M1082.3 614.8L1088.4 619.2L1086.1 626.4H1078.5L1076.2 619.2Z" fill="rgba(255,255,255,.12)" stroke="rgba(255,255,255,.75)" stroke-width="1" transform="rotate(-12 1082.3 621)"/>
<path d="M1594.2 372.600L1630.600 445H1557.900Z" fill="#3f6de0" stroke="#5fcfab" stroke-width="26" stroke-linejoin="round"/><path d="M1594.2 372.600L1630.600 445H1557.900Z" fill="#3f6de0" stroke="#3f6de0" stroke-width="17.200" stroke-linejoin="round"/>
<g fill="#fff"><rect x="1586.6" y="389.2" width="14.4" height="14.3" rx="1"/><rect x="1570.9" y="417.7" width="14.5" height="14.3" rx="1"/><rect x="1603" y="417.7" width="14.6" height="14.3" rx="1"/></g><path d="M1593.8 403V411.200H1610.3V418M1578.100 418V411.200H1594" stroke="#fff" stroke-width="1.700" fill="none"/>
<circle cx="1546" cy="377.2" r="14.1" fill="#50b19e"/><use href="#swirl" transform="translate(1546,377.2) scale(6.6)" fill="#fff" stroke="#50b19e" stroke-width=".1"/>
<path d="M1697 789L1739.0 816.9L1781 789L1739.0 872.7Z" fill="#3f6de0"/>
<g fill="#fff"><rect x="1722" y="803" width="34" height="14" rx="1"/><rect x="1728" y="844" width="22" height="14.700" rx="1"/><path d="M1735.700 821H1741.300V830.500H1745.800L1738.500 842.300L1731.200 830.500H1735.700Z"/></g>
<circle cx="1700.4" cy="815.5" r="14.1" fill="#50b19e"/><use href="#swirl" transform="translate(1700.4,815.5) scale(6.6)" fill="#fff" stroke="#50b19e" stroke-width=".1"/>
<path d="M1293 955.2L1335.0 983.1L1377 955.2L1335.0 1039Z" fill="#3f6de0"/>
<g fill="#fff"><rect x="1322.8" y="976.8" width="24.5" height="9.8" rx=".8"/><rect x="1306.900" y="1006.800" width="15.600" height="11" rx=".8"/><rect x="1327" y="1006.800" width="15.600" height="11" rx=".8"/><rect x="1347.300" y="1006.800" width="15.900" height="11" rx=".8"/>
<path d="M1332.9 990.2L1332.9 997.6L1329.9 997.6L1334.7 1005.0L1339.5 997.6L1336.5 997.6L1336.5 990.2Z"/><path d="M1324.7 989.6L1319.3 996.4L1317.1 994.6L1316.6 1002.6L1324.2 1000.2L1322.0 998.5L1327.3 991.6Z"/><path d="M1342.7 991.6L1348.0 998.5L1345.8 1000.2L1353.4 1002.6L1352.9 994.6L1350.7 996.4L1345.3 989.6Z"/></g>
<circle cx="1296" cy="981.8" r="14.1" fill="#50b19e"/><use href="#swirl" transform="translate(1296,981.8) scale(6.6)" fill="#fff" stroke="#50b19e" stroke-width=".1"/>
<circle cx="1051.9" cy="352.7" r="14.1" fill="#50b19e"/><use href="#swirl" transform="translate(1051.9,352.7) scale(6.6)" fill="#fff" stroke="#50b19e" stroke-width=".1"/>
<circle cx="1051.5" cy="1068.6" r="14.1" fill="#3f6de0"/><rect x="1047.200" y="1064.600" width="10.500" height="8" fill="rgba(255,255,255,.18)" stroke="rgba(255,255,255,.7)" stroke-width=".8" stroke-dasharray="1.200 .8"/><circle cx="1046.200" cy="1069" r="1" fill="#fff"/>
<g font-family="Liberation Sans, sans-serif" font-size="14" text-anchor="middle" fill="#111" stroke="#fff" stroke-width="3.6" stroke-linejoin="round" paint-order="stroke"><text x="1382.600" y="494.300">network</text><text x="1561.500" y="420" font-size="14.500">80/TCP</text></g>
</svg>
<div class="lbl" style="left:1519px;top:465.5px;width:150.0px;height:46.5px;padding-top:4.0px"><span style="letter-spacing:0.8px;margin-right:-0.8px">service-clusterip</span><br><span style="letter-spacing:0.05px;margin-right:-0.05px">(Service)</span></div>
<div class="lbl" style="left:1069px;top:681px;width:141.0px;height:46.7px;padding-top:4.1px"><span style="letter-spacing:1.2px;margin-right:-1.2px">deployment-ec</span><br><span style="letter-spacing:0.48px;margin-right:-0.48px">(Deployment)</span></div>
<div class="lbl" style="left:1635px;top:885px;width:208.4px;height:46.6px;padding-top:4.0px"><span style="letter-spacing:0.94px;margin-right:-0.94px">service-clusterip-rwkkp</span><br><span style="letter-spacing:0.4px;margin-right:-0.4px">(EndpointSlice)</span></div>
<div class="lbl" style="left:1260px;top:1051.2px;width:150.0px;height:46.6px;padding-top:4.0px"><span style="letter-spacing:0.8px;margin-right:-0.8px">service-clusterip</span><br><span style="letter-spacing:0.18px;margin-right:-0.18px">(Endpoints)</span></div>
<div class="lbl" style="left:1395.3px;top:1128.2px;width:122.4px;height:47.6px;padding-top:4.5px"><span style="letter-spacing:0.68px;margin-right:-0.68px">default</span><br><span style="letter-spacing:0.24px;margin-right:-0.24px">(Namespace)</span></div>
<div class="lbl" style="left:1113px;top:623px;width:53.5px;height:27.7px;font-size:18.6px;line-height:29.500px"><span>nginx</span></div>
<!-- top tab bar -->
<div class="abs" style="left:1518px;top:203px;width:212px;height:65px;border-radius:0 0 13px 13px;overflow:hidden">
  <div class="abs" style="left:0;top:0;width:100px;height:66px;background:#1e1e1e"></div>
  <div class="abs" style="left:100px;top:0;width:112px;height:66px;background:rgba(64,160,144,.2)"></div>
  <svg class="abs" style="left:0;top:-1px" width="212" height="66" viewBox="0 0 212 66">
    <use href="#swirl" transform="translate(50,34) scale(18.600)" fill="#f4f4f4" stroke="#1e1e1e" stroke-width=".15"/>
    <!-- support person -->
    <g transform="translate(156.300,0)">
      <path d="M-13.500 24.500V21.500A13.500 13.500 0 0 1 13.500 21.500V24.500" fill="none" stroke="#5e6f79" stroke-width="1.700"/>
      <rect x="-16" y="19.500" width="5.200" height="10.500" rx="2.600" fill="#5e6f79"/><rect x="10.800" y="19.500" width="5.200" height="10.500" rx="2.600" fill="#5e6f79"/>
      <circle cx="0" cy="22" r="9.800" fill="#3f494f"/>
      <path d="M13 29.500Q11 33.500 0 33.200" fill="none" stroke="#5e6f79" stroke-width="1.500"/>
      <path d="M-19.200 57.500V44.500C-19.200 37.500 -10 34.500 -4.500 34.200Q0 36.500 4.500 34.200C10 34.500 19.200 37.500 19.200 44.500V57.500Q19.200 58 17.500 58H-17.500Q-19.200 58 -19.200 57.500Z" fill="#3f494f"/>
      <circle cx="0" cy="47.500" r="6.600" fill="none" stroke="#3fd0a6" stroke-width="2" stroke-dasharray="5.200 1.700" transform="rotate(-70 0 47.500)"/>
    </g>
  </svg>
</div>
<!-- round buttons -->
<div class="rb" style="left:164px;top:236px;width:100px;height:100px">
  <div class="abs" style="left:32px;top:38px;width:36.400px;height:4.300px;background:#d9dee1"></div>
  <div class="abs" style="left:32px;top:47.900px;width:36.400px;height:4.300px;background:#d9dee1"></div>
  <div class="abs" style="left:32px;top:57.800px;width:36.400px;height:4.300px;background:#d9dee1"></div>
</div>
<div class="rb" style="left:170px;top:1334px;width:100px;height:100px">
  <svg width="100" height="100" viewBox="0 0 100 100">
    <g stroke="#3e7ea6" fill="none"><path d="M52.550 35.400V43.800L40.300 49.250V58.600M52.550 43.800L59.700 50.600" stroke-width="1.100"/><path d="M40.300 53.600H51.600" stroke-width="1.900"/></g>
    <g fill="#d9dee1"><circle cx="52.550" cy="35.400" r="2.600"/><circle cx="52.550" cy="43.800" r="4.600"/><circle cx="40.300" cy="49.250" r="2.600"/><circle cx="40.300" cy="58.600" r="2.600"/><circle cx="51.600" cy="53.600" r="2.600"/><circle cx="59.700" cy="50.600" r="2.600"/></g>
  </svg>
</div>
<div class="rb" style="left:2766px;top:1334px;width:100px;height:100px;background:#2f2f2f;z-index:30">
  <svg width="100" height="100" viewBox="0 0 100 100">
    <circle cx="45.200" cy="45.600" r="11.300" fill="none" stroke="#d6dadd" stroke-width="3.600"/>
    <path d="M53.800 54.200L65.500 65.800" stroke="#d6dadd" stroke-width="4.400" stroke-linecap="butt"/>
    <path d="M45.200 40.600V50.600M40.200 45.600H50.200" stroke="#d6dadd" stroke-width="1.900"/>
  </svg>
</div>
<!-- bottom toolbar -->
<div class="abs" style="left:1390px;top:1226px;width:256px;height:192px;border-radius:28px;background:#202020;overflow:hidden;box-shadow:0 2px 8px rgba(0,0,0,.5)">
  <div class="abs" style="left:0;top:0;width:96px;height:96px;background:#4fb0a0"></div>
  <div class="abs" style="left:96px;top:15.500px;width:1.600px;height:160px;background:#3d3d3d"></div>
  <svg class="abs" style="left:0;top:0" width="256" height="192" viewBox="0 0 256 192">
    <path d="M30.500 31L65 45.500L52.500 49.500L47 65Z" fill="#fff" stroke="#fff" stroke-width="6" stroke-linejoin="round"/>
    <!-- hand -->
    <g fill="#fff">
      <rect x="35.500" y="123.500" width="7.200" height="30" rx="3.600"/>
      <rect x="44.300" y="119.500" width="7.200" height="34" rx="3.600"/>
      <rect x="53.100" y="123" width="7.200" height="30" rx="3.600"/>
      <rect x="61.700" y="130.500" width="6.800" height="26" rx="3.400"/>
      <path d="M35.500 145H68.500V156C68.500 163 66 168 65 168H41C36 165 31 156 27.500 150.500C25.800 147.600 29.500 144 32.800 147L35.500 150Z"/>
    </g>
    <rect x="133" y="62" width="67" height="67" rx="15" fill="#d3d7da"/>
  </svg>
  <div class="t" style="left:133px;width:67px;text-align:center;top:60px;font-size:65px;font-weight:bold;color:#222">?</div>
</div>
<!-- layers -->
<svg class="abs" style="left:2449px;top:275px" width="42" height="40" viewBox="0 0 42 40" stroke-linejoin="round">
  <path d="M21 21L3 30L21 38L39 30Z" fill="#d3d8db" stroke="#d3d8db" stroke-width="3"/>
  <path d="M21 13L3 22L21 30L39 22Z" fill="#8e9497" stroke="#8e9497" stroke-width="3"/>
  <path d="M21 3L3 12.500L21 21L39 12.500Z" fill="#d6dbde" stroke="#d6dbde" stroke-width="3"/>
</svg>
<div class="t" id="layers" style="left:2508.500px;top:280px;font-size:29.300px;color:#fff">Layers</div>
<div class="abs" style="left:2649px;top:255px;width:223px;height:80px;border-radius:15px;background:#4fb0a0"></div>
<div class="abs" style="left:2790px;top:255px;width:2.400px;height:80px;background:#fff"></div>
<div class="t" id="share" style="left:2679.500px;top:280px;font-size:29.300px;color:#fff">Share</div>
<svg class="abs" style="left:2812px;top:275px" width="40" height="40" viewBox="0 0 40 40" fill="none" stroke="#fff" stroke-width="3.400" stroke-linecap="round">
  <g transform="rotate(-8 20 20)">
  <path d="M16.500 29L14 31.500A6.200 6.200 0 0 1 5.200 22.700L11 17A6.200 6.200 0 0 1 19.800 17"/>
  <path d="M23.500 11L26 8.500A6.200 6.200 0 0 1 34.800 17.300L29 23A6.200 6.200 0 0 1 20.200 23"/>
  </g>
</svg>
<!-- sidebar collapse tab -->
<div class="abs" style="left:95px;top:1186px;width:37px;height:89px;border-radius:8px 0 0 8px;background:#545d61"></div>
<svg class="abs" style="left:102px;top:1214px" width="24" height="34" viewBox="0 0 24 34"><path d="M4.500 4L18 17L4.500 30" fill="none" stroke="#e2e6e8" stroke-width="4.200"/></svg>
<!-- right edge strip -->
<div class="abs" style="left:2902px;top:200px;width:2px;height:1231px;background:rgba(255,255,255,.17);z-index:50"></div>
<!-- window corners -->
<svg class="abs" style="left:0;top:1428px;z-index:40" width="20" height="20" viewBox="0 0 20 20"><path d="M0 20V8A12 12 0 0 0 12 20Z" fill="#000"/></svg>
<svg class="abs" style="left:2884px;top:1428px;z-index:50" width="20" height="20" viewBox="0 0 20 20"><path d="M20 20V3A17 17 0 0 1 3 20Z" fill="#000"/><path d="M19 3A16 16 0 0 1 3 19" fill="none" stroke="rgba(255,255,255,.17)" stroke-width="2"/></svg>
<div id="panel" class="abs" style="left:2084px;top:360px;width:800px;height:1000px;border-radius:16px 16px 12px 12px;background:#19272f;overflow:hidden;box-shadow:0 6px 14px rgba(0,0,0,.55);z-index:20">
  <div class="abs" style="left:0;top:0;width:800px;height:128px;background:linear-gradient(100deg,#2e363c 0%,#3a464d 52%,#404e56 100%)"></div>
  <div class="abs" style="left:407.800px;top:9.700px;width:8px;height:8px;border-radius:50%;background:#eceff1"></div>
  <div class="abs" style="left:420px;top:9.700px;width:8px;height:8px;border-radius:50%;background:#eceff1"></div>
  <div class="abs" style="left:432.200px;top:9.700px;width:8px;height:8px;border-radius:50%;background:#eceff1"></div>
  <svg class="abs" style="left:714px;top:50px" width="28" height="28" viewBox="0 0 28 28"><path d="M1.500 1.500L26.500 26.500M26.500 1.500L1.500 26.500" stroke="#fff" stroke-width="4.200"/></svg>
  <!-- title card -->
  <div class="abs" style="left:32px;top:159.500px;width:724px;height:118px;background:#1c2c35"></div>
  <div class="abs" style="left:624px;top:182px;width:60px;height:74px;border-radius:9px 0 0 9px;background:#223f47"></div>
  <svg class="abs" style="left:60px;top:200px" width="42" height="38" viewBox="0 0 42 38">
    <g fill="#fff"><rect x="14.500" y="0" width="13" height="13"/><rect x="0" y="25" width="13" height="13"/><rect x="28.500" y="25" width="13" height="13"/></g>
    <path d="M21 13V19.500M6.500 25.500V19.500H35V25.500" fill="none" stroke="#fff" stroke-width="2"/>
  </svg>
  <div class="t" id="ptitle" style="left:121.500px;top:207.500px;font-size:27.200px;color:#d3d8db;letter-spacing:-1.18px">SERVICE-CLUSTERIP</div>
  <!-- toggle icons -->
  <svg class="abs" style="left:646px;top:204px" width="18" height="26" viewBox="0 0 18 26" fill="#e2e6e8">
    <rect x="0" y="0" width="3.300" height="3.300"/><rect x="6" y="0" width="10.500" height="3.300"/>
    <rect x="0" y="7" width="3.300" height="3.300"/><rect x="6" y="7" width="10.500" height="3.300"/>
    <rect x="0" y="14" width="3.300" height="3.300"/><rect x="6" y="14" width="7" height="3.300"/>
    <rect x="0" y="21" width="3.300" height="3.300"/>
  </svg>
  <svg class="abs" style="left:696px;top:199px" width="33" height="27" viewBox="0 0 33 27" fill="#e2e6e8">
    <rect x="0" y="0" width="3.600" height="3.600"/><rect x="6.500" y="0" width="26.500" height="3.600"/>
    <rect x="0" y="7.500" width="3.600" height="3.600"/><rect x="6.500" y="7.500" width="26.500" height="3.600"/>
    <rect x="0" y="15" width="3.600" height="3.600"/><rect x="6.500" y="15" width="26.500" height="3.600"/>
    <rect x="0" y="22.500" width="3.600" height="3.600"/><rect x="6.500" y="22.500" width="26.500" height="3.600"/>
  </svg>
  <!-- action icons -->
  <svg class="abs" style="left:410px;top:308px" width="32" height="32" viewBox="0 0 32 32" fill="#d3d8db"><path d="M0 31.500V24.500L20.500 4L27.500 11L7 31.500ZM23 1.500L25 -.5Q26.500 -1.500 28 0L31.500 3.500Q33 5 31.500 6.500L29.800 8.400Z"/></svg>
  <svg class="abs" style="left:481px;top:308px" width="42" height="32" viewBox="0 0 42 32" fill="none" stroke="#dde1e3" stroke-width="3.600">
    <path d="M5 30A18.300 18.300 0 1 1 37 30Z" stroke-linejoin="round"/>
    <path d="M19 26H24L30.500 13.500L27.800 12L21.500 22.500H19A1.800 1.800 0 0 0 19 26Z" fill="#aab1b5" stroke="none"/>
    <path d="M4 .6H37" stroke-width=".6" stroke="#7f8b91"/>
  </svg>
  <svg class="abs" style="left:629px;top:303px" width="42" height="42" viewBox="0 0 42 42"><use href="#swirl" transform="translate(21,21) scale(21.500)" fill="#d3d8db" stroke="#19272f" stroke-width=".14"/></svg>
  <svg class="abs" style="left:711px;top:310px" width="30" height="30" viewBox="0 0 30 30" fill="none" stroke="#e6e9eb" stroke-width="3"><path d="M15 1V19M6.500 11.500L15 20L23.500 11.500" stroke-linejoin="miter"/><path d="M2.500 19.500V26.500H27.500V19.500" stroke-linejoin="round" stroke-linecap="round"/></svg>
  <!-- fields -->
  <div class="t h" style="left:47px;top:316.1px;letter-spacing:.9px">Age</div>
  <div class="t v" style="left:47px;top:371.6px">0 hours</div>
  <div class="t h" style="left:47px;top:446.1px">Kind</div>
  <div class="t h" style="left:183px;top:446.1px">ApiVersion</div>
  <div class="t h" style="left:365px;top:446.1px">ServiceType</div>
  <div class="t v" style="left:47px;top:502.6px">Service</div>
  <div class="t v" style="left:183px;top:502.6px;letter-spacing:-3px">v1</div>
  <div class="t v" style="left:365px;top:502.6px;letter-spacing:-.35px">ClusterIP</div>
  <div class="t h" style="left:47px;top:574.6px;letter-spacing:.3px">ClusterIp</div>
  <div class="t v" style="left:47px;top:631.6px;letter-spacing:-1.3px">10.98.146.20</div>
  <div class="t h2" style="left:47px;top:704.6px">Namespace</div>
  <div class="t v" style="left:47px;top:762.1px;color:#5bcfa6;letter-spacing:.42px">default</div>
  <div class="t h2" style="left:47px;top:839.1px;letter-spacing:.33px">Selector</div>
  <div class="t v" style="left:47px;top:903.1px"><span style="font-family:'DejaVu Sans','Liberation Sans',sans-serif;font-size:25px;color:#8a969c">1.</span> <span style="-webkit-text-stroke:.5px #8b989f;letter-spacing:-.45px">app=9988110</span></div>
  <svg class="abs" style="left:12px;top:952px" width="28" height="27" viewBox="0 0 28 27" fill="none" stroke="#f1f3f4" stroke-width="1.900"><path d="M2 25L26 2M16.500 1.500H26.500V11.500M1.500 15.500V25.500H11.500"/></svg>
  <!-- scrollbar -->
  <div class="abs" style="left:788.200px;top:128px;width:11.600px;height:866px;border-radius:5.800px;background:#7b7b7b"></div>
</div>
<!-- feedback tab -->
<div class="abs" style="left:2834px;top:661px;width:72px;height:223px;border-radius:9px 0 0 9px;background:#4fb0a0;z-index:25"></div>
<div class="t" id="fb" style="left:2867px;top:843.500px;font-size:32.300px;color:#fff;transform-origin:0 0;transform:rotate(-90deg);z-index:26">Feedback</div>
</div>
</body>
</html>
